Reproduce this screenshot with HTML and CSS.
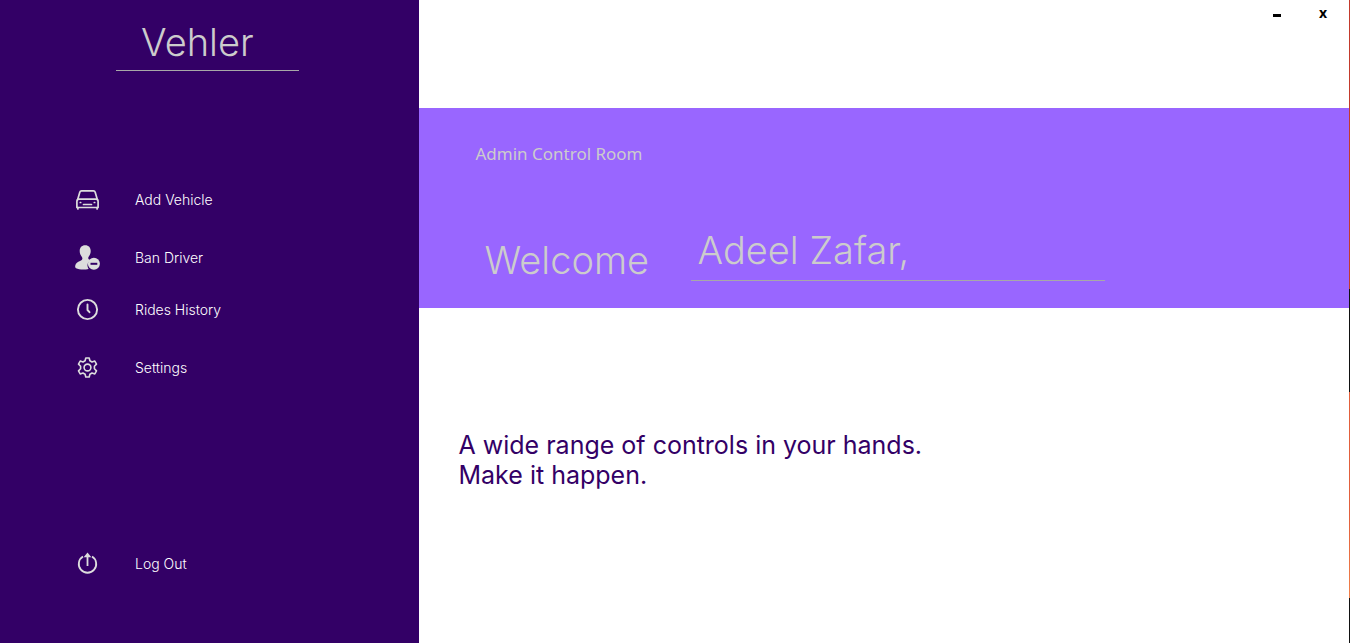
FILE: index.html
```html
<!DOCTYPE html>
<html lang="en">
<head>
<meta charset="utf-8">
<title>Vehler</title>
<link rel="stylesheet" href="styles.css">
</head>
<body>
<div class="app">
  <aside class="sidebar">
    <h1 class="brand">Vehler</h1>
    <nav class="menu">
      <button class="item" type="button">
        <svg class="icon" viewBox="0 0 26 26" fill="none" stroke="currentColor" stroke-width="1.7" stroke-linejoin="round" stroke-linecap="round">
          <path d="M2.700 12.500 4.800 5.200Q5.200 3.900 6.500 3.900H18.500Q19.800 3.900 20.200 5.200L22.300 12.500"/>
          <path d="M1.900 20.500V14.500Q1.900 12.200 4.200 12.200H20.800Q23.100 12.200 23.100 14.500V20.500Z"/>
          <path d="M2.900 20.500V22M22.100 20.500V22M8.500 17.500H16.500M5.300 15.500H5.700M19.300 15.500H19.700"/>
        </svg>
        <span>Add Vehicle</span>
      </button>
      <button class="item" type="button">
        <svg class="icon" viewBox="0 0 26 26">
          <path fill="currentColor" d="M10.200 0.200C13.700 0.200 15.700 2.500 15.700 6C15.700 8.700 14.700 10.200 13.500 12C12.800 13.700 13.700 14.700 15 15.400A6.800 6.800 0 0 0 13.600 24C9 24.900 4 24.600 1 23.300Q-0.100 22.700 0.200 20.700C0.700 17.900 2.700 17 5 16C7.200 15.100 8 13.700 6.900 12C5.700 10.200 4.700 8.700 4.700 6C4.700 2.500 6.700 0.200 10.200 0.200Z"/>
          <circle cx="18.900" cy="18.800" r="6" fill="currentColor"/>
          <path class="cut" d="M15.500 18.800H22.300"/>
        </svg>
        <span>Ban Driver</span>
      </button>
      <button class="item item-near" type="button">
        <svg class="icon" viewBox="0 0 26 26" fill="none" stroke="currentColor" stroke-width="1.900" stroke-linecap="round" stroke-linejoin="round">
          <circle cx="12.500" cy="12.500" r="9.600"/>
          <path d="M12.500 7.500V13L14.500 15.200"/>
        </svg>
        <span>Rides History</span>
      </button>
      <button class="item" type="button">
        <svg class="icon" viewBox="0 0 26 26" fill="none" stroke="currentColor" stroke-width="1.600" stroke-linejoin="round">
          <path d="M10.800 3H14.200L14.900 5.800L17 7L19.800 6.100L21.500 9.100L19.400 11.200V13.800L21.500 15.900L19.800 18.900L17 18L14.900 19.200L14.200 22H10.800L10.100 19.200L8 18L5.200 18.900L3.500 15.900L5.600 13.800V11.200L3.500 9.100L5.200 6.100L8 7L10.100 5.800Z"/>
          <circle cx="12.500" cy="12.500" r="3.400"/>
        </svg>
        <span>Settings</span>
      </button>
    </nav>
    <button class="item logout" type="button">
      <svg class="icon" viewBox="0 0 26 26" fill="none" stroke="currentColor" stroke-width="1.800">
        <path d="M8 5.600A8.700 8.700 0 1 0 17 5.600"/>
        <path d="M12.500 15V5"/>
        <path d="M12.500 1.400 16.300 6.200H8.700Z" fill="currentColor" stroke="none"/>
      </svg>
      <span>Log Out</span>
    </button>
  </aside>
  <main class="main">
    <header class="titlebar">
      <button class="win" type="button" aria-label="Minimize"><span class="dash"></span></button>
      <button class="win" type="button" aria-label="Close">x</button>
    </header>
    <section class="banner">
      <p class="room">Admin Control Room</p>
      <div class="greeting">
        <label class="welcome" for="name">Welcome</label>
        <input class="name" id="name" type="text" value="Adeel Zafar," readonly>
      </div>
    </section>
    <p class="tagline">A wide range of controls in your hands.<br>Make it happen.</p>
  </main>
  <div class="edge"></div>
</div>
</body>
</html>
```
FILE: styles.css
```css
* {
  box-sizing: border-box;
}

body {
  margin: 0;
  background: #fff;
  font-family: "Century Gothic", Inter, sans-serif;
}

button {
  border: 0;
  padding: 0;
  background: none;
  color: inherit;
  font: inherit;
}

.app {
  display: flex;
  min-height: 100vh;
}

.sidebar {
  display: flex;
  flex-direction: column;
  flex: 0 0 31%;
  padding-bottom: 64px;
  background: #330066;
  color: #ddd;
}

.brand {
  width: 183px;
  margin: 0 0 114px 116px;
  padding: 18px 0 4px 25px;
  border-bottom: 1px solid #a8a8a8;
  color: #ccc;
  font-size: 38px;
  font-weight: 300;
  line-height: 48px;
}

.menu {
  display: flex;
  flex-direction: column;
  gap: 28px;
}

.item {
  display: flex;
  align-items: center;
  gap: 34px;
  height: 30px;
  padding-left: 75px;
  font-size: 14px;
  font-weight: 300;
  text-align: left;
}

.item span {
  padding-bottom: 2px;
  color: #fff;
}

.item-near {
  margin-top: -6px;
}

.logout {
  margin-top: auto;
}

.icon {
  width: 26px;
  height: 26px;
}

.cut {
  stroke: #330066;
  stroke-width: 2;
}

.main {
  flex: 1;
  min-width: 0;
}

.titlebar {
  display: flex;
  justify-content: flex-end;
  gap: 22px;
  height: 108px;
  padding-right: 14px;
}

.win {
  display: flex;
  align-items: center;
  justify-content: center;
  width: 24px;
  height: 24px;
  color: #000;
  font-family: "Noto Sans", sans-serif;
  font-size: 14px;
  font-weight: 700;
}

.dash {
  width: 8px;
  height: 3px;
  margin-top: 6px;
  background: #000;
}

.banner {
  height: 200px;
  padding: 34px 57px 0;
  background: #9966ff;
  color: #ccc;
}

.room {
  margin: 0;
  font-family: Tahoma, "Noto Sans", sans-serif;
  font-size: 17px;
  line-height: 24px;
}

.greeting {
  display: flex;
  gap: 38px;
  margin-top: 60px;
  padding-left: 9px;
  font-size: 38px;
  font-weight: 300;
}

.welcome {
  width: 168px;
  padding-top: 10px;
  line-height: 48px;
}

.name {
  flex: 0 1 414px;
  min-width: 0;
  height: 55px;
  padding: 0 0 6px 7px;
  border: 0;
  border-bottom: 1px solid #a8a8a8;
  outline: 0;
  background: none;
  color: inherit;
  font: inherit;
}

.tagline {
  margin: 122px 40px 0;
  color: #330066;
  font-size: 25px;
  font-weight: 400;
  line-height: 30px;
}

.edge {
  flex: 0 0 1px;
  background: linear-gradient(#c33a2c 45%, #111 45% 61%, #e2603c 61% 80%, #f0804a 93%, #111 93%);
}
```
